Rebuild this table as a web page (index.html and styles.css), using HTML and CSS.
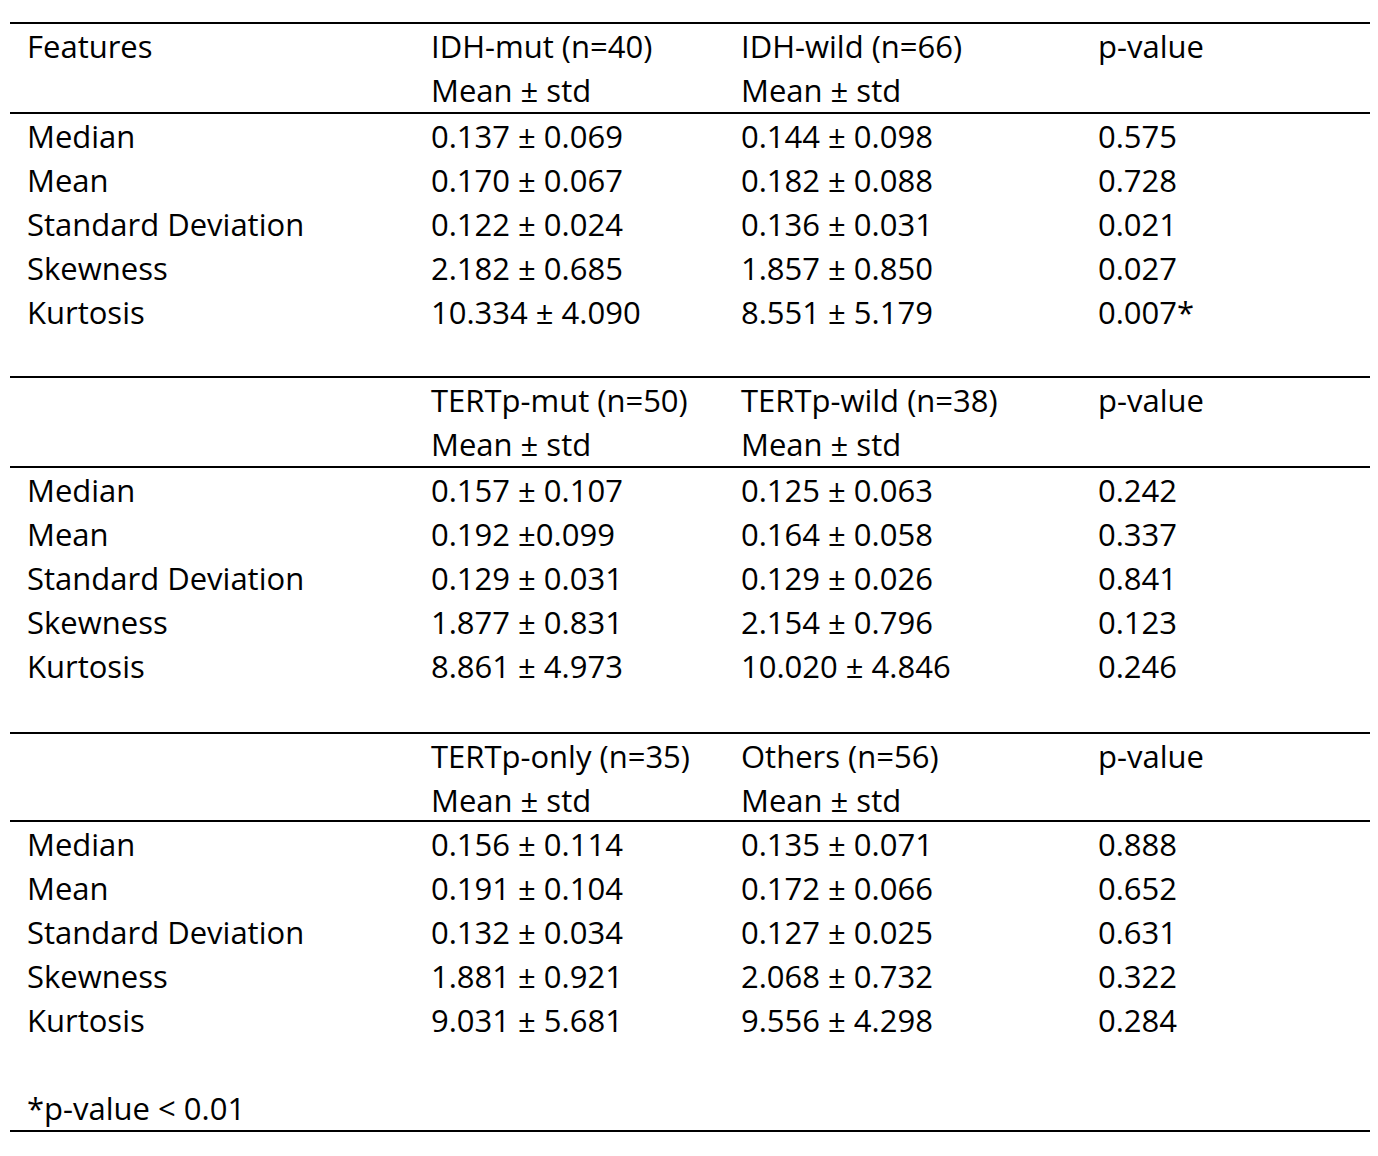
FILE: index.html
```html
<!DOCTYPE html>
<html>
<head>
<meta charset="utf-8">
<link rel="stylesheet" href="styles.css">
</head>
<body>
<div class="sheet">
  <section class="block">
    <div class="row head"><span>Features</span><span>IDH-mut (n=40)</span><span>IDH-wild (n=66)</span><span>p-value</span></div>
    <div class="row head"><span></span><span>Mean ± std</span><span>Mean ± std</span><span></span></div>
    <div class="body">
      <div class="row"><span>Median</span><span>0.137 ± 0.069</span><span>0.144 ± 0.098</span><span>0.575</span></div>
      <div class="row"><span>Mean</span><span>0.170 ± 0.067</span><span>0.182 ± 0.088</span><span>0.728</span></div>
      <div class="row"><span>Standard Deviation</span><span>0.122 ± 0.024</span><span>0.136 ± 0.031</span><span>0.021</span></div>
      <div class="row"><span>Skewness</span><span>2.182 ± 0.685</span><span>1.857 ± 0.850</span><span>0.027</span></div>
      <div class="row"><span>Kurtosis</span><span>10.334 ± 4.090</span><span>8.551 ± 5.179</span><span>0.007*</span></div>
      <div class="row blank short"><span></span><span></span><span></span><span></span></div>
    </div>
  </section>
  <section class="block">
    <div class="row head"><span></span><span>TERTp-mut (n=50)</span><span>TERTp-wild (n=38)</span><span>p-value</span></div>
    <div class="row head"><span></span><span>Mean ± std</span><span>Mean ± std</span><span></span></div>
    <div class="body">
      <div class="row"><span>Median</span><span>0.157 ± 0.107</span><span>0.125 ± 0.063</span><span>0.242</span></div>
      <div class="row"><span>Mean</span><span>0.192 ±0.099</span><span>0.164 ± 0.058</span><span>0.337</span></div>
      <div class="row"><span>Standard Deviation</span><span>0.129 ± 0.031</span><span>0.129 ± 0.026</span><span>0.841</span></div>
      <div class="row"><span>Skewness</span><span>1.877 ± 0.831</span><span>2.154 ± 0.796</span><span>0.123</span></div>
      <div class="row"><span>Kurtosis</span><span>8.861 ± 4.973</span><span>10.020 ± 4.846</span><span>0.246</span></div>
      <div class="row blank"><span></span><span></span><span></span><span></span></div>
    </div>
  </section>
  <section class="block last">
    <div class="row head"><span></span><span>TERTp-only (n=35)</span><span>Others (n=56)</span><span>p-value</span></div>
    <div class="row head short"><span></span><span>Mean ± std</span><span>Mean ± std</span><span></span></div>
    <div class="body">
      <div class="row"><span>Median</span><span>0.156 ± 0.114</span><span>0.135 ± 0.071</span><span>0.888</span></div>
      <div class="row"><span>Mean</span><span>0.191 ± 0.104</span><span>0.172 ± 0.066</span><span>0.652</span></div>
      <div class="row"><span>Standard Deviation</span><span>0.132 ± 0.034</span><span>0.127 ± 0.025</span><span>0.631</span></div>
      <div class="row"><span>Skewness</span><span>1.881 ± 0.921</span><span>2.068 ± 0.732</span><span>0.322</span></div>
      <div class="row"><span>Kurtosis</span><span>9.031 ± 5.681</span><span>9.556 ± 4.298</span><span>0.284</span></div>
      <div class="row blank"><span></span><span></span><span></span><span></span></div>
      <div class="note"><span>*p-value &lt; 0.01</span></div>
    </div>
  </section>
</div>
</body>
</html>
```
FILE: styles.css
```css
html, body {
  margin: 0;
  padding: 0;
  background: #ffffff;
}
body {
  font-family: "Open Sans", "Noto Sans", sans-serif;
  font-size: 31px;
  line-height: 44px;
  color: #000000;
}
.sheet {
  padding: 22px 8px 0 10px;
}
.block {
  border-top: 2px solid #000;
}
.last {
  border-bottom: 2px solid #000;
}
.body {
  border-top: 2px solid #000;
}
.row {
  display: grid;
  grid-template-columns: 404px 310px 357px 1fr;
  padding-left: 17px;
  height: 44px;
  align-items: center;
  white-space: nowrap;
}
.row.short {
  height: 42px;
}
.note {
  height: 44px;
  padding-left: 17px;
  display: flex;
  align-items: center;
  white-space: nowrap;
}
```
